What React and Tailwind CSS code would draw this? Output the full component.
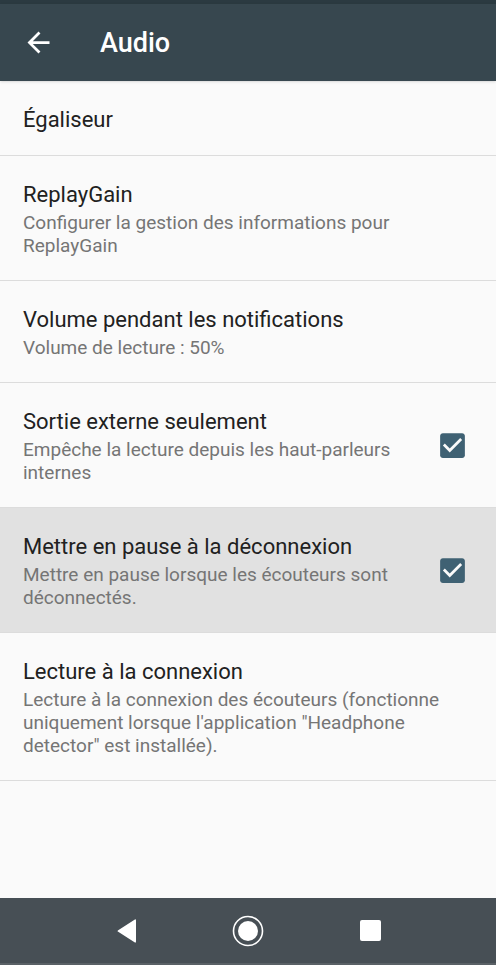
import React from "react";

const items = [
  { title: "Égaliseur" },
  {
    title: "ReplayGain",
    summary: "Configurer la gestion des informations pour ReplayGain",
  },
  {
    title: "Volume pendant les notifications",
    summary: "Volume de lecture : 50%",
  },
  {
    title: "Sortie externe seulement",
    summary: "Empêche la lecture depuis les haut-parleurs internes",
    checked: true,
  },
  {
    title: "Mettre en pause à la déconnexion",
    summary: "Mettre en pause lorsque les écouteurs sont déconnectés.",
    checked: true,
    pressed: true,
  },
  {
    title: "Lecture à la connexion",
    summary:
      "Lecture à la connexion des écouteurs (fonctionne uniquement lorsque l'application \"Headphone detector\" est installée).",
  },
];

const CheckBox = () => (
  <svg width="33" height="33" viewBox="0 0 24 24" className="shrink-0">
    <path
      fill="#3f6173"
      d="M19 3H5c-1.11 0-2 .9-2 2v14c0 1.1.89 2 2 2h14c1.11 0 2-.9 2-2V5c0-1.1-.89-2-2-2z"
    />
    <path fill="#fafafa" d="M10 17l-5-5 1.41-1.41L10 14.17l7.59-7.59L19 8l-9 9z" />
  </svg>
);

const PrefRow = ({ title, summary, checked, pressed }) => (
  <div
    className={`flex items-center border-b border-[#dcdcdc] pl-[23px] ${
      checked !== undefined ? "pr-[27px]" : "pr-[22px]"
    } ${summary ? "pt-[26px] pb-[23px]" : "h-[75px] pt-[3px]"} ${
      pressed ? "bg-[#e1e1e1]" : ""
    }`}
  >
    <div className="flex-1 min-w-0">
      <div className="text-[22px] leading-[26px] text-[#212121]">{title}</div>
      {summary && (
        <div className="mt-[3px] text-[19px] leading-[23px] text-[#757575]">
          {summary}
        </div>
      )}
    </div>
    {checked !== undefined && (
      <div className="ml-[16px] -mt-[2px]">
        <CheckBox />
      </div>
    )}
  </div>
);

export default function App() {
  return (
    <div
      className="flex h-[965px] w-[496px] flex-col bg-[#fafafa]"
      style={{ fontFamily: "Roboto, 'Noto Sans', sans-serif" }}
    >
      <div className="h-[4px] bg-[#2b3a41]" />
      <header className="flex h-[77px] items-center bg-[#37474f] shadow-sm">
        <button className="ml-[22px] flex h-[33px] w-[33px] items-center justify-center">
          <svg width="33" height="33" viewBox="0 0 24 24">
            <path
              fill="#ffffff"
              d="M20 11H7.83l5.59-5.59L12 4l-8 8 8 8 1.41-1.41L7.83 13H20v-2z"
            />
          </svg>
        </button>
        <h1 className="ml-[45px] pt-[2px] text-[27px] font-medium text-white">Audio</h1>
      </header>
      <main className="flex-1">
        {items.map((it) => (
          <PrefRow key={it.title} {...it} />
        ))}
      </main>
      <nav className="flex h-[67px] items-center justify-center border-b-2 border-[#5a6166] bg-[#474f55]">
        <div className="flex w-[122px] items-center justify-center pl-[2px]">
          <svg width="20" height="24" viewBox="0 0 20 24">
            <path d="M19 1.5v21a1 1 0 0 1-1.5.85L1.2 12.85a1 1 0 0 1 0-1.7L17.5.65A1 1 0 0 1 19 1.5z" fill="#ffffff" />
          </svg>
        </div>
        <div className="flex w-[122px] items-center justify-center">
          <svg width="32" height="32" viewBox="0 0 32 32">
            <circle cx="16" cy="16" r="14.5" fill="none" stroke="#ffffff" strokeWidth="1.6" />
            <circle cx="16" cy="16" r="10" fill="#ffffff" />
          </svg>
        </div>
        <div className="flex w-[122px] items-center justify-center">
          <div className="h-[21px] w-[21px] rounded-[2px] bg-white" />
        </div>
      </nav>
    </div>
  );
}
